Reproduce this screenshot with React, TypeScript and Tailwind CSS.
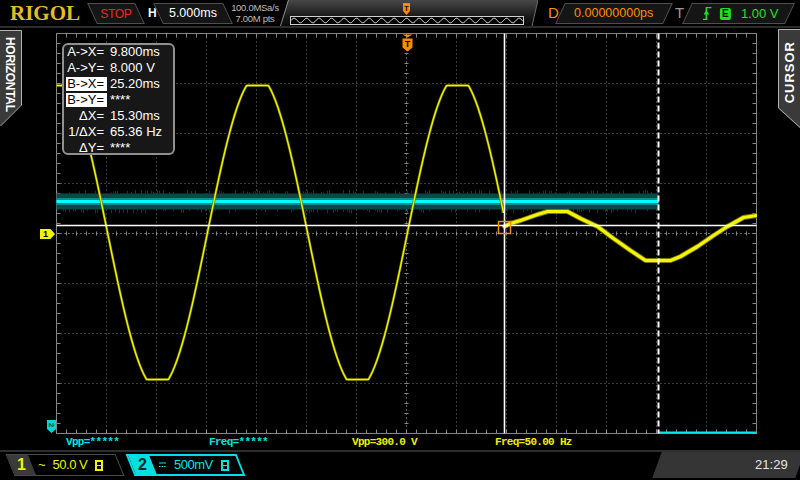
import React from 'react';

// graticule: 14 x 8 divisions of 50px, page coords x 56..756, y 35..435
const GX0 = 56;
const GX1 = 756;
const GY0 = 35;
const GY1 = 435;

function rng(seed: number) {
  let s = seed;
  return () => {
    s = (s * 16807) % 2147483647;
    return s / 2147483647;
  };
}

const traceA = (() => {
  const pts: string[] = [];
  for (let x = 56; x <= 503; x++) {
    const v = Math.max(-147, Math.min(147, 156 * Math.cos((2 * Math.PI * (x - 57)) / 200)));
    pts.push(`${x},${(234 - v).toFixed(1)}`);
  }
  return pts.join(' ');
})();

const traceB =
  '504,228 510,225 520,222 537,216 547,213 567,213 580,220 597,228 613,240 630,252 645,262 670,262 680,258 697,248 713,237 727,228 743,219 756,217';

const noisePath = (() => {
  const r = rng(11);
  let d = '';
  for (let x = 57; x < 658; x += 2) {
    if (r() < 0.4) d += `M${x} 195V${(195 - 1 - r() * 3).toFixed(1)}`;
    if (r() < 0.4) d += `M${x} 211V${(211 + 1 + r() * 3).toFixed(1)}`;
  }
  return d;
})();

const tickPath = (() => {
  let d = '';
  for (let x = GX0; x <= GX1; x += 10) {
    d += `M${x} ${GY0}V${GY0 + 4}M${x} ${GY1}V${GY1 - 4}M${x} 233V237`;
  }
  for (let y = GY0; y <= GY1; y += 10) {
    d += `M${GX0} ${y}H${GX0 + 4}M${GX1} ${y}H${GX1 - 4}M404 ${y}H408`;
  }
  return d;
})();

const dotPath = (() => {
  let d = '';
  for (let x = 106; x < GX1; x += 50) d += `M${x} ${GY0}V${GY1}`;
  for (let y = 85; y < GY1; y += 50) d += `M${GX0} ${y}H${GX1}`;
  return d;
})();

const overviewWave = (() => {
  const pts: string[] = [];
  for (let x = 11; x <= 243; x += 0.5) {
    pts.push(`${x},${(20.5 - 2.3 * Math.sin((2 * Math.PI * (x - 11)) / 12.5)).toFixed(2)}`);
  }
  return pts.join(' ');
})();

const ROWS = [
  { k: 'A->X=', v: '9.800ms' },
  { k: 'A->Y=', v: '8.000 V' },
  { k: 'B->X=', v: '25.20ms', hi: true },
  { k: 'B->Y=', v: '****', hi: true },
  { k: 'ΔX=', v: '15.30ms' },
  { k: '1/ΔX=', v: '65.36 Hz' },
  { k: 'ΔY=', v: '****' },
];

const MEAS = [
  { t: 'Vpp=*****', c: 'text-[#00e4e4]' },
  { t: 'Freq=*****', c: 'text-[#00e4e4]' },
  { t: 'Vpp=300.0 V', c: 'text-[#eeee00]' },
  { t: 'Freq=50.00 Hz', c: 'text-[#eeee00]' },
];

function BwIcon({ color }: { color: string }) {
  return (
    <svg width="8" height="11" viewBox="0 0 8 11">
      <rect x="0" y="0" width="8" height="11" fill={color} />
      <rect x="2" y="2" width="4" height="3" fill="#000" />
      <rect x="2" y="6" width="4" height="3" fill="#000" />
    </svg>
  );
}

function TopBar() {
  return (
    <div className="flex h-[28px] items-center border-b-2 border-[#2c2c2c] bg-black">
      <div className="w-[92px] pl-[10px] font-['Liberation_Serif',serif] text-[21px] font-bold leading-none text-[#e6bd1f]">
        RIGOL
      </div>
      <div className="flex h-[21px] w-[48px] skew-x-[25deg] items-center justify-center border border-[#4e4e4e] bg-[#151515]">
        <span className="block -skew-x-[25deg] text-[12px] tracking-[-0.3px] text-[#ff1c1c]">STOP</span>
      </div>
      <div className="w-[18px] pl-[8px] text-[12px] font-bold text-white">H</div>
      <div className="flex h-[21px] w-[70px] skew-x-[25deg] items-center justify-center border border-[#4e4e4e] bg-[#151515]">
        <span className="block -skew-x-[25deg] text-[12.5px] text-white">5.000ms</span>
      </div>
      <div className="flex w-[52px] flex-col items-center pl-[2px] text-[9.5px] leading-[11px] tracking-[-0.3px] text-[#bdbdbd]">
        <span>100.0MSa/s</span>
        <span>7.00M pts</span>
      </div>
      <svg width="258" height="26" viewBox="0 0 258 26" className="self-start">
        <defs>
          <linearGradient id="ovg" x1="0" y1="0" x2="0" y2="1">
            <stop offset="0" stopColor="#484848" />
            <stop offset="0.55" stopColor="#1e1e1e" />
            <stop offset="1" stopColor="#080808" />
          </linearGradient>
        </defs>
        <polygon points="8,0 258,0 252,26 0,26" fill="url(#ovg)" />
        <line x1="0.5" y1="26" x2="8.5" y2="0" stroke="#8a8a8a" strokeWidth="1" />
        <line x1="252" y1="26" x2="258" y2="0" stroke="#6a6a6a" strokeWidth="1" />
        <rect x="10.5" y="16.5" width="233" height="8" fill="#000" stroke="#cfcfcf" strokeWidth="1" />
        <polyline points={overviewWave} fill="none" stroke="#f0f0f0" strokeWidth="1" />
        <path d="M123 3H130V11L126.5 15L123 11Z" fill="#ff8a00" />
        <text x="126.5" y="10.5" fontSize="7" fontWeight="bold" textAnchor="middle" fill="#000" fontFamily="Liberation Sans, sans-serif">
          T
        </text>
      </svg>
      <div className="w-[22px] pl-[10px] text-[15px] text-[#ff8c00]">D</div>
      <div className="flex h-[21px] w-[108px] -skew-x-[25deg] items-center justify-center border border-[#4e4e4e] bg-[#151515]">
        <span className="block skew-x-[25deg] text-[12.5px] text-[#ff8c00]">0.00000000ps</span>
      </div>
      <div className="w-[19px] pl-[7px] text-[15px] text-[#9a9a9a]">T</div>
      <div className="flex h-[21px] w-[103px] -skew-x-[25deg] items-center border border-[#4e4e4e] bg-[#151515]">
        <div className="flex skew-x-[25deg] items-center pl-[15px]">
          <svg width="9" height="13" viewBox="0 0 9 13">
            <path d="M0 12.5H3.5V0.5H8.5" fill="none" stroke="#20e020" strokeWidth="1.6" />
            <path d="M1.5 7.5L3.5 4.5L5.5 7.5" fill="none" stroke="#20e020" strokeWidth="1.4" />
          </svg>
          <div className="ml-[8px] flex h-[12px] w-[11px] items-center justify-center rounded-[2px] bg-[#20e020] text-[10px] font-bold leading-none text-black">
            E
          </div>
          <span className="ml-[10px] text-[13px] text-[#20e020]">1.00 V</span>
        </div>
      </div>
    </div>
  );
}

function SideTabLeft() {
  return (
    <div className="relative mt-[2px] flex h-[97px] w-[22px] justify-center">
      <svg className="absolute inset-0" width="22" height="97" viewBox="0 0 22 97">
        <polygon points="0,0 21,0 21,75 0,96" fill="#3a3a3a" />
        <path d="M0 0.5H21.5V75L0.5 96" fill="none" stroke="#b4b4b4" strokeWidth="1" />
      </svg>
      <span className="relative -ml-[3px] pt-[7px] text-[12px] font-bold leading-none tracking-[-0.3px] text-white [writing-mode:vertical-rl]">
        HORIZONTAL
      </span>
    </div>
  );
}

function SideTabRight() {
  return (
    <div className="relative mt-[1px] flex h-[99px] w-[22px] flex-col items-center">
      <svg className="absolute inset-0" width="22" height="99" viewBox="0 0 22 99">
        <polygon points="0,0 22,0 22,99 0,79" fill="#3a3a3a" />
        <path d="M22 0.5H0.5V79L22 98.5" fill="none" stroke="#b4b4b4" strokeWidth="1" />
      </svg>
      <span className="relative ml-[1px] mt-[12px] rotate-180 text-[13px] font-bold leading-none tracking-[1px] text-white [writing-mode:vertical-rl]">
        CURSOR
      </span>
    </div>
  );
}

function CursorBox() {
  return (
    <div className="absolute left-[6px] top-[10px] h-[112px] w-[113px] rounded-[6px] border-2 border-[#909090] bg-[#171717] text-[13px] text-white">
      <div className="-mt-px">
        {ROWS.map((r) => (
          <div key={r.k} className="flex h-[16px] items-center">
            <div
              className={`ml-[2px] flex h-[14px] w-[41px] items-center justify-end pr-[3px] ${
                r.hi ? 'bg-white text-black' : ''
              }`}
            >
              {r.k}
            </div>
            <span className="ml-[3px]">{r.v}</span>
          </div>
        ))}
      </div>
    </div>
  );
}

function Plot() {
  return (
    <svg width="701" height="401" viewBox="55.5 34.5 701 401" className="block">
      {/* graticule */}
      <path d={dotPath} stroke="#7a7a7a" strokeWidth="1" strokeDasharray="1 3" fill="none" />
      <path d="M56 235H756M406 35V435" stroke="#7a7a7a" strokeWidth="1" strokeDasharray="1 3" fill="none" />
      <path d={tickPath} stroke="#858585" strokeWidth="1" fill="none" />
      <rect x="56" y="35" width="700" height="400" fill="none" stroke="#858585" strokeWidth="1" />

      {/* channel 2 */}
      <path d={noisePath} stroke="#0a3e3e" strokeWidth="1" fill="none" />
      <rect x="56" y="195" width="602" height="16" fill="#0b4848" />
      <rect x="56" y="199.5" width="602" height="7" fill="#148c8c" />
      <rect x="56" y="201.5" width="602" height="3" fill="#00ffff" />
      <line x1="658" y1="434" x2="756" y2="434" stroke="#00e8e8" strokeWidth="2" />

      {/* channel 1 */}
      <polyline points={traceA} fill="none" stroke="#6a6a00" strokeWidth="2.6" strokeLinejoin="round" />
      <polyline points={traceA} fill="none" stroke="#f2f200" strokeWidth="1.4" strokeLinejoin="round" />
      <polyline points={traceB} fill="none" stroke="#7a7a00" strokeWidth="5" strokeLinejoin="round" strokeLinecap="round" />
      <polyline points={traceB} fill="none" stroke="#f5f500" strokeWidth="3.2" strokeLinejoin="round" strokeLinecap="round" />

      {/* cursors */}
      <line x1="56" y1="227" x2="756" y2="227" stroke="#fff" strokeWidth="1.6" />
      <line x1="504" y1="35" x2="504" y2="435" stroke="#fff" strokeWidth="1.6" />
      <line x1="658" y1="35" x2="658" y2="435" stroke="#fff" strokeWidth="2" strokeDasharray="6 3" />
      <rect x="498" y="223" width="12" height="12" fill="none" stroke="#ff8c00" strokeWidth="1.5" />

      {/* trigger position */}
      <path d="M402 36H412L407 39Z" fill="#ff8a00" />
      <path d="M402 40H412V49L407 53L402 49Z" fill="#ff8a00" />
      <text x="407" y="48.5" fontSize="9" fontWeight="bold" textAnchor="middle" fill="#000" fontFamily="Liberation Sans, sans-serif">
        T
      </text>
    </svg>
  );
}

function BottomBar() {
  return (
    <div className="flex h-[28px] border-t-2 border-[#2e2e2e] bg-black">
      <div className="ml-[10px] mt-[2px] flex h-[22px] w-[110px] skew-x-[22deg] border border-[#4a4a4a]">
        <div className="flex w-[21px] items-center justify-center bg-[#3a3a3a]">
          <span className="block -skew-x-[22deg] text-[16px] font-bold leading-none text-[#f2f200]">1</span>
        </div>
        <div className="flex -skew-x-[22deg] items-center pl-[6px] text-[#f2f200]">
          <span className="text-[13px]">~</span>
          <span className="ml-[7px] text-[13px] tracking-[-0.5px]">50.0 V</span>
          <span className="ml-[8px] flex">
            <BwIcon color="#f2f200" />
          </span>
        </div>
      </div>
      <div className="ml-[10px] mt-[2px] flex h-[22px] w-[111px] skew-x-[22deg] border-2 border-[#00e0e0]">
        <div className="flex w-[21px] items-center justify-center bg-[#00e0e0]">
          <span className="block -skew-x-[22deg] text-[16px] font-bold leading-none text-[#06292b]">2</span>
        </div>
        <div className="flex -skew-x-[22deg] items-center pl-[6px] text-[#00e4e4]">
          <svg width="7" height="6" viewBox="0 0 7 6">
            <path d="M0 1H7" stroke="#00e4e4" strokeWidth="1" />
            <path d="M0 4.5H7" stroke="#00e4e4" strokeWidth="1" strokeDasharray="1.5 1" />
          </svg>
          <span className="ml-[8px] text-[13px] tracking-[-0.5px]">500mV</span>
          <span className="ml-[8px] flex">
            <BwIcon color="#00e4e4" />
          </span>
        </div>
      </div>
      <div className="ml-auto flex h-full w-[143px] -skew-x-[20deg] items-center justify-end bg-[#353535] pr-[12px]">
        <span className="block skew-x-[20deg] text-[13px] text-[#e6e6e6]">21:29</span>
      </div>
    </div>
  );
}

export default function App() {
  return (
    <div className="h-[480px] w-[800px] overflow-hidden bg-black font-['Liberation_Sans',Arial,sans-serif]">
      <TopBar />
      <div className="flex h-[422px]">
        <div className="relative w-[56px]">
          <SideTabLeft />
          {/* channel 1 offset marker */}
          <div className="absolute left-[40px] top-[201px] flex h-[10px] w-[15px] items-center bg-[#f2f200] pl-[3px] text-[9px] font-bold leading-none text-black [clip-path:polygon(0_0,70%_0,100%_50%,70%_100%,0_100%)]">
            1
          </div>
          {/* channel 2 off-screen marker */}
          <div className="absolute left-[47px] top-[392px] flex h-[13px] w-[9px] items-start justify-center bg-[#00d8d8] pt-[1px] [clip-path:polygon(0_0,100%_0,100%_70%,50%_100%,0_70%)]">
            <span className="block rotate-90 text-[8px] font-bold leading-none text-[#003333]">2</span>
          </div>
        </div>
        <div className="flex w-[701px] flex-col pt-[5px]">
          <div className="relative h-[401px]">
            <Plot />
            <CursorBox />
          </div>
          <div className="grid h-[16px] grid-cols-[143px_143px_143px_143px] items-center pl-[10px] font-['Liberation_Mono',monospace] text-[11px] font-bold tracking-[-0.7px]">
            {MEAS.map((m) => (
              <span key={m.t} className={m.c}>
                {m.t}
              </span>
            ))}
          </div>
        </div>
        <div className="flex flex-1 justify-end">
          <SideTabRight />
        </div>
      </div>
      <BottomBar />
    </div>
  );
}
